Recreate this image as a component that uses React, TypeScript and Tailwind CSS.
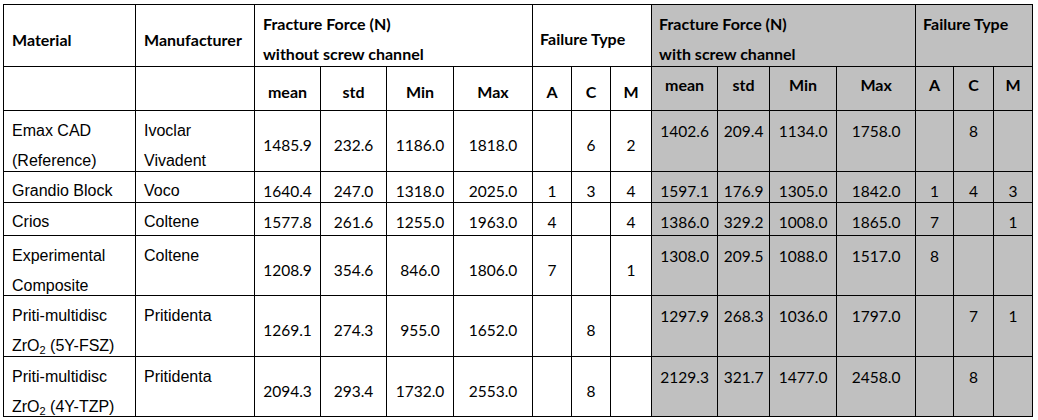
import React from "react";

const head = "font-['Lato',sans-serif] font-bold text-[16px] text-black";
const num = "font-['Lato',sans-serif] text-[15.5px] text-black";
const txt = "font-['Liberation_Sans',Arial,sans-serif] text-[16px] text-black";

type Row = {
  material: React.ReactNode;
  maker: React.ReactNode;
  tall: boolean;
  left: string[];
  leftFail: string[];
  right: string[];
  rightFail: string[];
};

const zr = (kind: string) => (
  <>
    Priti-multidisc
    <br />
    ZrO<sub className="text-[11px] align-baseline relative top-[3px]">2</sub> ({kind})
  </>
);

const rows: Row[] = [
  {
    material: (
      <>
        Emax CAD
        <br />
        (Reference)
      </>
    ),
    maker: (
      <>
        Ivoclar
        <br />
        Vivadent
      </>
    ),
    tall: true,
    left: ["1485.9", "232.6", "1186.0", "1818.0"],
    leftFail: ["", "6", "2"],
    right: ["1402.6", "209.4", "1134.0", "1758.0"],
    rightFail: ["", "8", ""],
  },
  {
    material: "Grandio Block",
    maker: "Voco",
    tall: false,
    left: ["1640.4", "247.0", "1318.0", "2025.0"],
    leftFail: ["1", "3", "4"],
    right: ["1597.1", "176.9", "1305.0", "1842.0"],
    rightFail: ["1", "4", "3"],
  },
  {
    material: "Crios",
    maker: "Coltene",
    tall: false,
    left: ["1577.8", "261.6", "1255.0", "1963.0"],
    leftFail: ["4", "", "4"],
    right: ["1386.0", "329.2", "1008.0", "1865.0"],
    rightFail: ["7", "", "1"],
  },
  {
    material: (
      <>
        Experimental
        <br />
        Composite
      </>
    ),
    maker: "Coltene",
    tall: true,
    left: ["1208.9", "354.6", "846.0", "1806.0"],
    leftFail: ["7", "", "1"],
    right: ["1308.0", "209.5", "1088.0", "1517.0"],
    rightFail: ["8", "", ""],
  },
  {
    material: zr("5Y-FSZ"),
    maker: "Pritidenta",
    tall: true,
    left: ["1269.1", "274.3", "955.0", "1652.0"],
    leftFail: ["", "8", ""],
    right: ["1297.9", "268.3", "1036.0", "1797.0"],
    rightFail: ["", "7", "1"],
  },
  {
    material: zr("4Y-TZP"),
    maker: "Pritidenta",
    tall: true,
    left: ["2094.3", "293.4", "1732.0", "2553.0"],
    leftFail: ["", "8", ""],
    right: ["2129.3", "321.7", "1477.0", "2458.0"],
    rightFail: ["", "8", ""],
  },
];

const heights = ["h-[61px]", "h-[31px]", "h-[33px]", "h-[60px]", "h-[61px]", "h-[60px]"];
const widths = [132, 119, 66, 66, 67, 79, 39, 39, 41, 66, 52, 67, 79, 38, 40, 39];
const subHeads = ["mean", "std", "Min", "Max", "A", "C", "M"];

const td = "border border-black p-0 align-top";
const gray = "bg-[#c0c0c0]";

// inner box keeps the row at its set height; extra lines just spill over
function Box({ top, className = "", children }: { top: string; className?: string; children?: React.ReactNode }) {
  return <div className={`h-[20px] leading-[30px] whitespace-nowrap ${top} ${className}`}>{children}</div>;
}

export default function App() {
  return (
    <div className="bg-white w-[1038px] h-[420px] pt-[4px] pl-[3px]">
      <table className="border-collapse table-fixed w-[1029px]">
        <colgroup>
          {widths.map((w, i) => (
            <col key={i} style={{ width: w }} />
          ))}
        </colgroup>
        <tbody>
          <tr className="h-[62px]">
            <td className={`${td} ${head}`}>
              <Box top="mt-[20px] pl-[8px]">Material</Box>
            </td>
            <td className={`${td} ${head}`}>
              <Box top="mt-[20px] pl-[8px]">Manufacturer</Box>
            </td>
            <td colSpan={4} className={`${td} ${head}`}>
              <Box top="mt-[4px] pl-[8px]">
                Fracture Force (N)
                <br />
                without screw channel
              </Box>
            </td>
            <td colSpan={3} className={`${td} ${head}`}>
              <Box top="mt-[19px] pl-[7px]">Failure Type</Box>
            </td>
            <td colSpan={4} className={`${td} ${head} ${gray}`}>
              <Box top="mt-[4px] pl-[7px]">
                Fracture Force (N)
                <br />
                with screw channel
              </Box>
            </td>
            <td colSpan={3} className={`${td} ${head} ${gray}`}>
              <Box top="mt-[4px] pl-[7px]">Failure Type</Box>
            </td>
          </tr>
          <tr className="h-[44px]">
            <td className={td}></td>
            <td className={td}></td>
            {subHeads.map((h) => (
              <td key={h} className={`${td} ${head}`}>
                <Box top="mt-[10px]" className="text-center">
                  {h}
                </Box>
              </td>
            ))}
            {subHeads.map((h) => (
              <td key={"g" + h} className={`${td} ${head} ${gray}`}>
                <Box top="mt-[3px]" className="text-center">
                  {h}
                </Box>
              </td>
            ))}
          </tr>
          {rows.map((r, i) => (
            <tr key={i} className={heights[i]}>
              <td className={`${td} ${txt}`}>
                <Box top={`pl-[8px] ${r.tall ? "mt-[5px]" : "mt-[4px]"}`}>{r.material}</Box>
              </td>
              <td className={`${td} ${txt}`}>
                <Box top={`pl-[8px] ${r.tall ? "mt-[5px]" : "mt-[4px]"}`}>{r.maker}</Box>
              </td>
              {[...r.left, ...r.leftFail].map((v, j) => (
                <td key={j} className={`${td} ${num}`}>
                  <Box top={r.tall ? "mt-[19px]" : "mt-[4px]"} className="text-center">
                    {v}
                  </Box>
                </td>
              ))}
              {[...r.right, ...r.rightFail].map((v, j) => (
                <td key={"g" + j} className={`${td} ${num} ${gray}`}>
                  <Box top={r.tall ? "mt-[5px]" : "mt-[4px]"} className="text-center">
                    {v}
                  </Box>
                </td>
              ))}
            </tr>
          ))}
        </tbody>
      </table>
    </div>
  );
}
